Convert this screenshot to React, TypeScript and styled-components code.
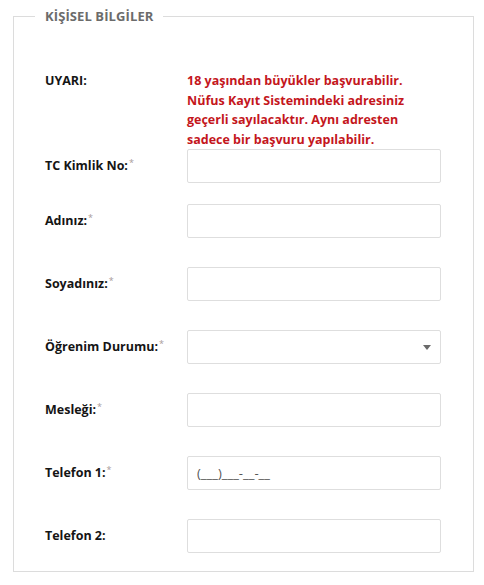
import React from "react";
import styled, { createGlobalStyle } from "styled-components";

const Global = createGlobalStyle`
  html, body { margin: 0; padding: 0; background: #fff; }
  body { font-family: "Open Sans", "Noto Sans", Arial, sans-serif; }
`;

const Fieldset = styled.fieldset`
  box-sizing: border-box;
  width: 461px;
  margin: 6px 0 0 13px;
  padding: 0 0 18px 21px;
  border: 1px solid #dcdcdc;
  background: #fff;
`;

const Legend = styled.legend`
  padding: 0 10px;
  font-size: 13px;
  line-height: 20px;
  font-weight: 700;
  color: #6b6b6b;
  letter-spacing: 0.1px;
`;

const Body = styled.div`
  padding-left: 10px;
  display: flex;
  flex-direction: column;
`;

const Row = styled.div<{ $top: number; $start?: boolean }>`
  display: grid;
  grid-template-columns: 142px 254px;
  align-items: ${(p) => (p.$start ? "start" : "center")};
  margin-top: ${(p) => p.$top}px;
`;

const Label = styled.label`
  font-size: 12.5px;
  line-height: 19.5px;
  font-weight: 700;
  color: #151515;
`;

const Req = styled.sup`
  font-size: 9px;
  font-weight: 400;
  color: #a89a9a;
  vertical-align: top;
  position: relative;
  top: -3px;
  margin-left: 1px;
`;

const Warning = styled.div`
  font-size: 12.5px;
  line-height: 19.5px;
  font-weight: 700;
  color: #c4161c;
`;

const Input = styled.input`
  box-sizing: border-box;
  width: 254px;
  height: 34px;
  border: 1px solid #dedede;
  border-radius: 2px;
  padding: 0 9px;
  font-family: "Open Sans", "Noto Sans", Arial, sans-serif;
  font-size: 13px;
  color: #555;
  background: #fff;
  outline: none;
  &::placeholder { color: #555; }
`;

const SelectBox = styled.div`
  box-sizing: border-box;
  width: 254px;
  height: 34px;
  border: 1px solid #dedede;
  border-radius: 2px;
  display: flex;
  align-items: center;
  justify-content: flex-end;
  padding-right: 9px;
  background: #fff;
`;

const Caret = styled.span`
  width: 0;
  height: 0;
  border-left: 4.5px solid transparent;
  border-right: 4.5px solid transparent;
  border-top: 5px solid #6a6a6a;
`;

type F = { label: string; req?: boolean; top: number; kind?: "select" | "phone" };

const fields: F[] = [
  { label: "TC Kimlik No:", req: true, top: 0 },
  { label: "Adınız:", req: true, top: 21 },
  { label: "Soyadınız:", req: true, top: 29 },
  { label: "Öğrenim Durumu:", req: true, top: 29, kind: "select" },
  { label: "Mesleği:", req: true, top: 29 },
  { label: "Telefon 1:", req: true, top: 29, kind: "phone" },
  { label: "Telefon 2:", top: 29 },
];

export default function App() {
  return (
    <>
      <Global />
      <Fieldset>
        <Legend>KİŞİSEL BİLGİLER</Legend>
        <Body>
          <Row $top={45} $start>
            <Label>UYARI:</Label>
            <Warning>
              18 yaşından büyükler başvurabilir. Nüfus Kayıt Sistemindeki adresiniz
              geçerli sayılacaktır. Aynı adresten sadece bir başvuru yapılabilir.
            </Warning>
          </Row>
          {fields.map((f) => (
            <Row key={f.label} $top={f.top}>
              <Label>
                {f.label}
                {f.req && <Req>*</Req>}
              </Label>
              {f.kind === "select" ? (
                <SelectBox>
                  <Caret />
                </SelectBox>
              ) : f.kind === "phone" ? (
                <Input placeholder="(___)___-__-__" />
              ) : (
                <Input />
              )}
            </Row>
          ))}
        </Body>
      </Fieldset>
    </>
  );
}
